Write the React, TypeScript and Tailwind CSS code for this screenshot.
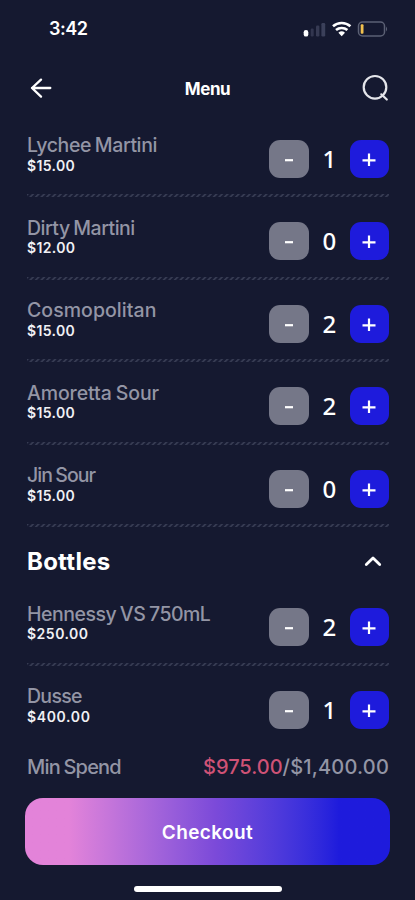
import React, { useState } from 'react';

interface MenuItem {
  name: string;
  price: string;
  count: number;
  nameClass: string;
  priceClass: string;
}

const cocktails: MenuItem[] = [
  { name: 'Lychee Martini', price: '$15.00', count: 1, nameClass: 'tracking-[-0.4px]', priceClass: 'tracking-[0.35px]' },
  { name: 'Dirty Martini', price: '$12.00', count: 0, nameClass: 'tracking-[-0.5px]', priceClass: 'tracking-[0.35px]' },
  { name: 'Cosmopolitan', price: '$15.00', count: 2, nameClass: 'tracking-[0.05px]', priceClass: 'tracking-[0.35px]' },
  { name: 'Amoretta Sour', price: '$15.00', count: 2, nameClass: 'tracking-[-0.1px]', priceClass: 'tracking-[0.35px]' },
  { name: 'Jin Sour', price: '$15.00', count: 0, nameClass: 'tracking-[-0.95px]', priceClass: 'tracking-[0.35px]' },
];

const bottles: MenuItem[] = [
  { name: 'Hennessy VS 750mL', price: '$250.00', count: 2, nameClass: 'tracking-[-0.5px]', priceClass: 'tracking-[0.5px]' },
  { name: 'Dusse', price: '$400.00', count: 1, nameClass: 'tracking-[-0.7px]', priceClass: 'tracking-[0.65px]' },
];

function StatusBar() {
  return (
    <div className="flex h-[57px] items-center justify-between pl-[49px] pr-[27px]">
      <span className="text-[18px] leading-none font-semibold tracking-[-0.5px]">3:42</span>
      <svg width="86" height="18" viewBox="0 0 86 18" fill="none">
        <rect x="1.7" y="10" width="4.6" height="6.6" rx="2.2" fill="#fff" />
        <rect x="8.7" y="8.5" width="3" height="8" rx="1.2" fill="#32364f" />
        <rect x="14" y="5.5" width="3.4" height="11" rx="1.2" fill="#363a53" />
        <rect x="19.4" y="3" width="3.8" height="13.5" rx="1.2" fill="#3b405a" />
        <path d="M31 6.3a13 13 0 0 1 17.4 0M34 10.1a8.7 8.7 0 0 1 11.4 0" stroke="#fff" strokeWidth="2.6" />
        <path d="M36.4 12.7a5 5 0 0 1 6.6 0l-3.3 3.6z" fill="#fff" />
        <rect x="56.5" y="2" width="26" height="14" rx="4" stroke="#5b6074" strokeWidth="1.5" />
        <rect x="58.7" y="4.3" width="2.8" height="9.5" rx="1" fill="#f1c04e" />
        <path d="M84 6.5q2.2 2.5 0 5z" fill="#5b6074" />
      </svg>
    </div>
  );
}

function Header() {
  return (
    <header className="flex h-[57.5px] items-center justify-between pt-[4px] pl-[30px] pr-[26px]">
      <button aria-label="Back" className="w-[24px]">
        <svg width="22" height="20" viewBox="0 0 22 20" fill="none" stroke="#fff" strokeWidth="2.3" strokeLinecap="round" strokeLinejoin="round">
          <path d="M20.3 10H2M11 1.6L2 10l9 8.6" />
        </svg>
      </button>
      <h1 className="pt-[3px] text-[17px] leading-none font-bold tracking-[-0.4px]">Menu</h1>
      <button aria-label="Search">
        <svg width="28" height="28" viewBox="0 0 28 28" fill="none" stroke="#e4e5ea" strokeWidth="2.2" strokeLinecap="round">
          <circle cx="14" cy="13.3" r="11.3" />
          <path d="M20.3 20.3l5.5 5.2" />
        </svg>
      </button>
    </header>
  );
}

function Divider() {
  return (
    <div className="h-[3px] w-full shrink-0 bg-[repeating-linear-gradient(135deg,#363b52_0px,#363b52_0.9px,#171b33_1.8px,#171b33_3.1px,#363b52_3.93px)]" />
  );
}

function MenuRow({ item, divider = true }: { item: MenuItem; divider?: boolean }) {
  const [count, setCount] = useState(item.count);

  return (
    <div className="flex h-[82.5px] flex-col justify-between">
      <div className="flex items-start justify-between">
        <div className="pt-[19.5px]">
          <h3 className={`text-[19.5px] leading-[22.5px] font-[450] text-[#9395a5] [word-spacing:-1px] ${item.nameClass}`}>{item.name}</h3>
          <p className={`text-[14px] leading-[18px] font-semibold text-[#f0f0f4] ${item.priceClass}`}>{item.price}</p>
        </div>
        <div className="flex items-center pt-[25px]">
          <button
            onClick={() => setCount(Math.max(0, count - 1))}
            className="flex h-[38px] w-[40px] items-center justify-center rounded-[11px] bg-[#757788]"
          >
            <svg width="10" height="16" viewBox="0 0 10 16">
              <path d="M1 9.2h8" stroke="#fff" strokeWidth="2.2" />
            </svg>
          </button>
          <span className="w-[40.5px] text-center font-['Noto_Sans',sans-serif] text-[24px] leading-[38px] font-medium">{count}</span>
          <button
            onClick={() => setCount(count + 1)}
            className="flex h-[38px] w-[39.5px] items-center justify-center rounded-[11px] bg-[#1e1bdc]"
          >
            <svg width="14" height="14" viewBox="0 0 14 14">
              <path d="M.5 8.3h13M7 1.6v13" stroke="#fff" strokeWidth="2.2" />
            </svg>
          </button>
        </div>
      </div>
      {divider && <Divider />}
    </div>
  );
}

export default function App() {
  return (
    <div className="flex h-[900px] w-[415px] flex-col overflow-hidden bg-[#151930] font-['Inter',sans-serif] text-white">
      <StatusBar />
      <Header />
      <main className="pl-[27px] pr-[26px]">
        {cocktails.map((item) => (
          <MenuRow key={item.name} item={item} />
        ))}
        <div className="flex h-[56px] items-center justify-between pt-[13px] pr-[7px]">
          <h2 className="text-[24px] leading-none font-bold tracking-[0.25px]">Bottles</h2>
          <svg width="18" height="12" viewBox="0 0 18 12" fill="none" stroke="#fff" strokeWidth="2.8" strokeLinecap="round" strokeLinejoin="round">
            <path d="M2.3 8.6L9 2l6.7 6.6" />
          </svg>
        </div>
        {bottles.map((item, i) => (
          <MenuRow key={item.name} item={item} divider={i < bottles.length - 1} />
        ))}
        <div className="flex h-[50px] items-center justify-between pb-[13px] text-[20px] leading-none text-[#9395a5]">
          <span className="font-[450] tracking-[-0.8px] [word-spacing:-1px]">Min Spend</span>
          <span className="font-medium tracking-[0.2px]">
            <span className="text-[#cf5276] tracking-[0px]">$975.00</span>/$1,400.00
          </span>
        </div>
      </main>
      <button className="mx-[25px] h-[67px] shrink-0 rounded-[18px] bg-linear-to-r from-[#e383d9] from-12% via-[#7c4ad9] via-52% to-[#1e1bdc] to-86% pt-[3px] text-[19px] font-semibold tracking-[0.4px]">
        Checkout
      </button>
      <div className="mx-auto mt-[21px] h-[6px] w-[148px] shrink-0 rounded-full bg-white" />
    </div>
  );
}
